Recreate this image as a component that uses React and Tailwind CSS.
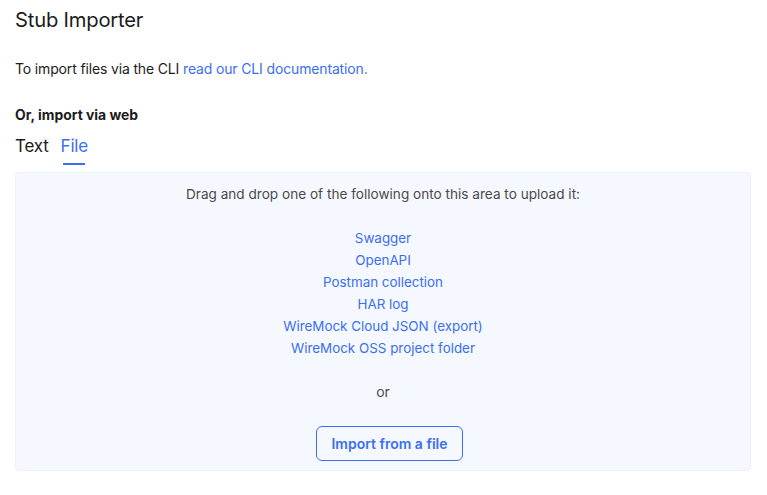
export default function App() {
  const links = [
    "Swagger",
    "OpenAPI",
    "Postman collection",
    "HAR log",
    "WireMock Cloud JSON (export)",
    "WireMock OSS project folder",
  ];
  return (
    <div className="bg-white w-[767px] h-[495px] px-[15px] pt-[6px] text-[#1c1c1c]" style={{ fontFamily: "Inter, 'Noto Sans', sans-serif" }}>
      <h1 className="text-[20.2px] leading-[28px] font-normal tracking-[-0.2px]">Stub Importer</h1>
      <p className="mt-[25px] text-[14px] leading-[20px] tracking-[-0.15px]">
        To import files via the CLI <a className="text-[#3b6ff0]">read our CLI documentation.</a>
      </p>
      <p className="mt-[26px] text-[13.9px] leading-[20px] font-bold">Or, import via web</p>
      <div className="flex gap-[12px] mt-[8px] text-[17px] leading-[26px] tracking-[-0.2px]">
        <div>Text</div>
        <div className="text-[#3b6ff0] flex flex-col items-center">
          <span>File</span>
          <span className="mt-[4px] w-[22px] h-[2px] bg-[#3b6ff0]"></span>
        </div>
      </div>
      <div className="mt-[7px] w-[736px] h-[299px] bg-[#f5f8fe] border border-[#edf1fa] rounded-[4px] flex flex-col items-center pt-[10px]">
        <p className="text-[13.6px] leading-[22px] text-[#4a4a4a]">Drag and drop one of the following onto this area to upload it:</p>
        <div className="mt-[22px] flex flex-col items-center text-[13.4px] leading-[22px] text-[#3b6ff0]">
          {links.map((l) => (
            <a key={l}>{l}</a>
          ))}
        </div>
        <p className="mt-[22px] text-[14px] leading-[22px] text-[#4a4a4a]">or</p>
        <button className="mt-[23px] ml-[13px] w-[147px] h-[35px] border border-[#3b6ff0] rounded-[6px] text-[14px] font-semibold text-[#3b6ff0]">Import from a file</button>
      </div>
    </div>
  );
}
